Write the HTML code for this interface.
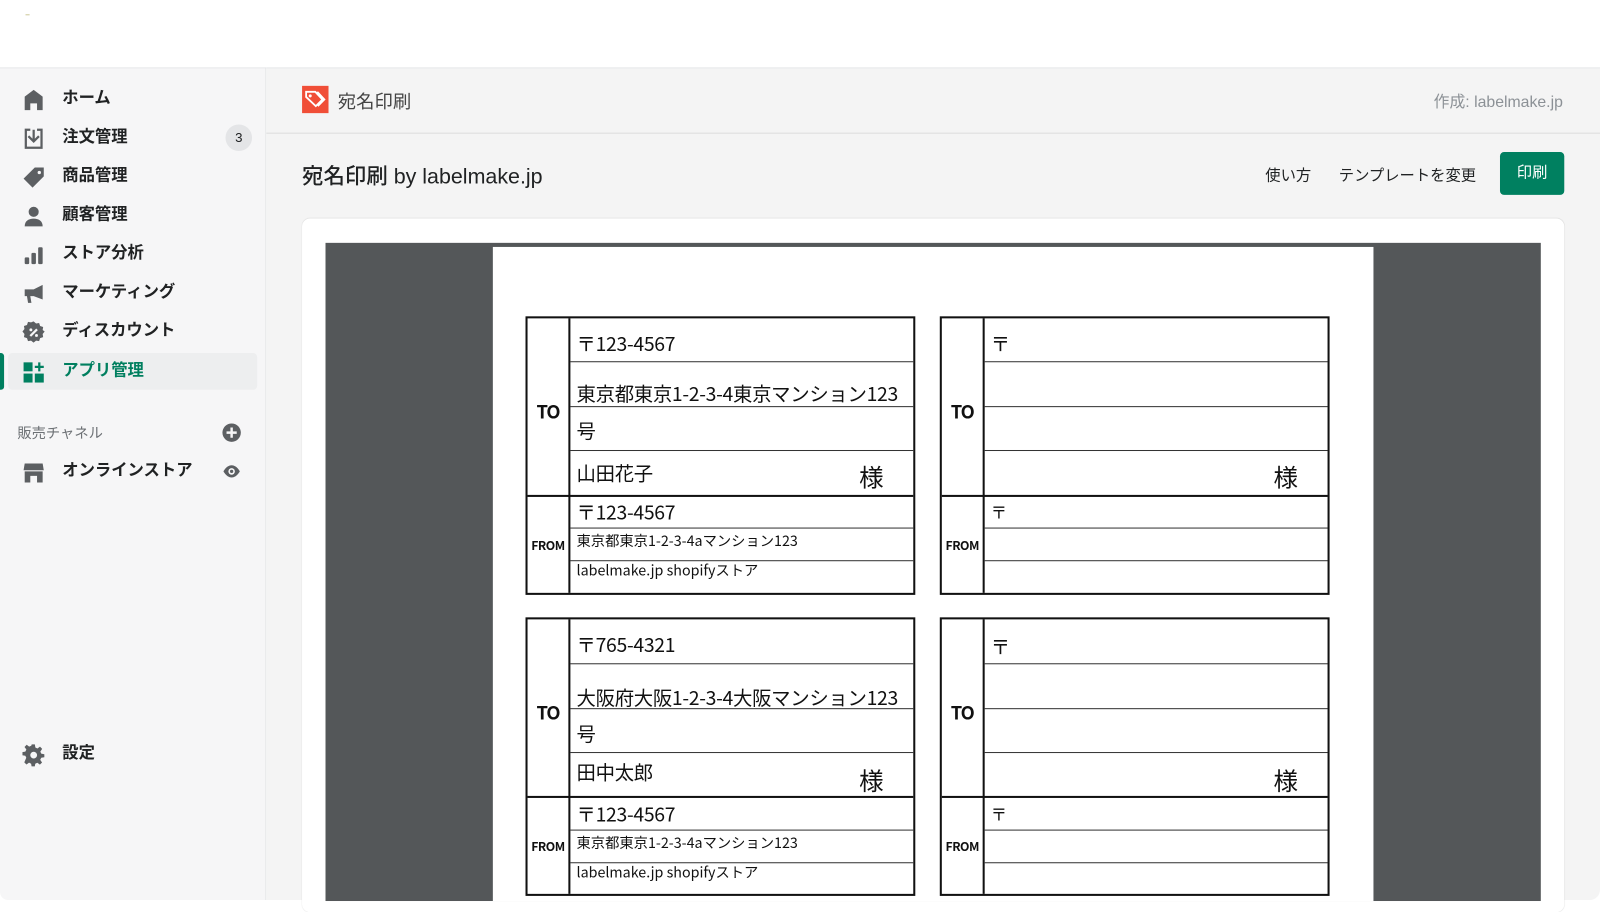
<!DOCTYPE html>
<html><head><meta charset="utf-8"><style>
*{margin:0;padding:0;box-sizing:border-box}
body{width:1600px;height:900px;background:#fff;font-family:"Liberation Sans","Noto Sans CJK JP",sans-serif;position:relative;overflow:hidden;color:#202223}
#wrap{position:absolute;left:0;top:0;width:1568px;height:882px;transform:scale(1.0204);transform-origin:0 0}
.abs{position:absolute}
#side{left:0;top:66px;width:261px;height:816px;background:#f6f6f7;border-right:1px solid #e1e3e5;border-top:1px solid #e1e3e5;border-bottom-left-radius:8px}
#main{left:261px;top:66px;width:1307px;height:816px;background:#f4f4f4;border-top:1px solid #e1e3e5;border-bottom-right-radius:10px}
.nav{position:absolute;left:22px;font-size:16px;font-weight:bold;color:#202223;height:38px;line-height:38px}
.nav svg{position:absolute;left:0;top:9px}
.nav span{position:absolute;left:39px;white-space:nowrap}
.lab{position:absolute;width:382px;height:273px;border:2px solid #111;background:#fff;font-family:"Noto Sans CJK JP",sans-serif;color:#111}
.lab .v{position:absolute;left:40px;top:0;width:2px;height:100%;background:#111}
.lab .h2{position:absolute;left:0;top:173px;width:100%;height:2px;background:#111}
.lab .h{position:absolute;left:42px;width:336px;height:1px;background:#333}
.lab .t{position:absolute;left:48px;white-space:nowrap;line-height:1}
.lab .to{position:absolute;left:0;width:40px;text-align:center;font-weight:bold;font-size:18px;top:78px;letter-spacing:-1px}
.lab .fr{position:absolute;left:0;width:40px;text-align:center;font-weight:bold;font-size:12px;top:214px;letter-spacing:-0.5px}
.lab .sama{position:absolute;left:325px;top:143px;font-size:24px;line-height:1}
.lab .ad{font-size:19px;letter-spacing:-0.3px}
</style></head><body>
<div id="wrap">
<div class="abs" style="left:25px;top:14px;width:4px;height:1px;background:#cdc89a"></div>
<div id="side" class="abs">
 <div class="nav" style="top:11px"><svg width="22" height="22" viewBox="0 0 20 20"><path d="M10 1 L2 7 V19 H7 V13 H13 V19 H18 V7 Z" fill="#5c5f62"/></svg><span>ホーム</span></div>
 <div class="nav" style="top:49px"><svg width="22" height="22" viewBox="0 0 20 20"><path d="M2 1h5v2H4v14h12V3h-3V1h5v18H2z M9 2h2v8l3-3 1.4 1.4L10 13.8 4.6 8.4 6 7l3 3z" fill="#5c5f62"/></svg><span>注文管理</span></div>
 <div class="abs" style="left:221px;top:55px;width:26px;height:26px;border-radius:13px;background:#e4e5e7;font-size:13px;text-align:center;line-height:26px;color:#202223">3</div>
 <div class="nav" style="top:87px"><svg width="22" height="22" viewBox="0 0 20 20"><path d="M11 1h8v8L9 19 1 11zM15 4a1.5 1.5 0 100 3 1.5 1.5 0 000-3z" fill="#5c5f62" fill-rule="evenodd"/></svg><span>商品管理</span></div>
 <div class="nav" style="top:125px"><svg width="22" height="22" viewBox="0 0 20 20"><circle cx="10" cy="6" r="4.5" fill="#5c5f62"/><path d="M2 19c0-5 3.5-7 8-7s8 2 8 7z" fill="#5c5f62"/></svg><span>顧客管理</span></div>
 <div class="nav" style="top:163px"><svg width="22" height="22" viewBox="0 0 20 20"><rect x="2" y="12" width="4" height="6" rx="1" fill="#5c5f62"/><rect x="8" y="8" width="4" height="10" rx="1" fill="#5c5f62"/><rect x="14" y="3" width="4" height="15" rx="1" fill="#5c5f62"/></svg><span>ストア分析</span></div>
 <div class="nav" style="top:201px"><svg width="22" height="22" viewBox="0 0 20 20"><path d="M18 2v13L10 12H7l1 6H5l-1-6H2V6h8z" fill="#5c5f62"/></svg><span>マーケティング</span></div>
 <div class="nav" style="top:239px"><svg width="22" height="22" viewBox="0 0 20 20"><path d="M10 0l2.5 2 3-.5 1 3 3 1-.5 3L21 10l-2 2.5.5 3-3 1-1 3-3-.5L10 21l-2.5-2-3 .5-1-3-3-1 .5-3L-1 10l2-2.5-.5-3 3-1 1-3 3 .5z" fill="#5c5f62" transform="scale(.9) translate(1 0)"/><path d="M7 13l6-6" stroke="#f6f6f7" stroke-width="2"/><circle cx="7.5" cy="7.5" r="1.3" fill="#f6f6f7"/><circle cx="12.5" cy="12.5" r="1.3" fill="#f6f6f7"/></svg><span>ディスカウント</span></div>
 <div class="abs" style="left:8px;top:279px;width:244px;height:36px;background:#edeeef;border-radius:4px"></div>
 <div class="abs" style="left:0;top:279px;width:4px;height:36px;background:#008060;border-radius:0 3px 3px 0"></div>
 <div class="nav" style="top:278px;color:#007f5f"><svg width="22" height="22" viewBox="0 0 20 20"><rect x="1" y="1" width="8" height="8" fill="#008060"/><rect x="1" y="11" width="8" height="8" fill="#008060"/><rect x="11" y="11" width="8" height="8" fill="#008060"/><path d="M15 1v8M11 5h8" stroke="#008060" stroke-width="2"/></svg><span>アプリ管理</span></div>
 <div class="abs" style="left:17px;top:347px;font-size:14px;color:#6d7175">販売チャネル</div>
 <svg class="abs" style="left:217px;top:347px" width="20" height="20" viewBox="0 0 20 20"><circle cx="10" cy="10" r="9" fill="#5c5f62"/><path d="M10 5v10M5 10h10" stroke="#f6f6f7" stroke-width="2.4"/></svg>
 <div class="nav" style="top:376px"><svg width="22" height="22" viewBox="0 0 20 20"><path d="M2 2h16l1 6H1z M2 9h16v10h-5v-6H7v6H2z" fill="#5c5f62"/></svg><span>オンラインストア</span></div>
 <svg class="abs" style="left:217px;top:385px" width="20" height="20" viewBox="0 0 20 20"><path d="M10 4C5 4 2 10 2 10s3 6 8 6 8-6 8-6-3-6-8-6z" fill="#5c5f62"/><circle cx="10" cy="10" r="3.2" fill="#f6f6f7"/><circle cx="10" cy="10" r="1.6" fill="#5c5f62"/></svg>
 <div class="nav" style="top:653px"><svg width="22" height="22" viewBox="0 0 20 20"><path d="M8.5 0h3l.5 3 2 1 2.5-1.8 2.1 2.1L16.8 7l.9 2 3 .5v3l-3 .5-1 2 1.8 2.5-2.1 2.1-2.5-1.8-2 .9-.5 3h-3l-.5-3-2-1-2.5 1.8-2.1-2.1L3.2 13l-.9-2-3-.5v-3l3-.5 1-2L1.5 2.5l2.1-2.1L6 2.2l2-.9z" fill="#5c5f62" transform="scale(.92) translate(.5 .5)"/><circle cx="10" cy="10" r="3" fill="#f6f6f7"/></svg><span>設定</span></div>
</div>
<div id="main" class="abs">
 <div class="abs" style="left:0;top:63px;width:1307px;height:1px;background:#dcdcdc"></div>
 <svg class="abs" style="left:35px;top:17px" width="26" height="27" viewBox="0 0 26 27"><rect width="26" height="27" fill="#f04e37"/><path d="M4 6h9l7 7.5-6.5 6.5L4 11z" fill="none" stroke="#fff" stroke-width="1.8"/><path d="M15 6l7 7.5-6.5 6.5" fill="none" stroke="#fff" stroke-width="1.6"/><circle cx="8" cy="10" r="1.5" fill="#fff"/></svg>
 <div class="abs" style="left:70px;top:19px;font-size:18px;color:#444">宛名印刷</div>
 <div class="abs" style="left:1144px;top:21px;font-size:15.5px;color:#8c9196">作成: labelmake.jp</div>
 <div class="abs" style="left:35px;top:90px;font-size:21px;color:#202223;font-weight:500">宛名印刷 by labelmake.jp</div>
 <div class="abs" style="left:979px;top:94px;font-size:15px;color:#202223">使い方</div>
 <div class="abs" style="left:1051px;top:94px;font-size:15px;color:#202223">テンプレートを変更</div>
 <div class="abs" style="left:1209px;top:82px;width:63px;height:42px;background:#008060;border-radius:4px;color:#fff;font-size:15px;text-align:center;line-height:42px">印刷</div>
 <div class="abs" style="left:35px;top:147px;width:1237px;height:680px;background:#fff;border-radius:8px;box-shadow:0 0 1px rgba(0,0,0,.15)"></div>
 <div class="abs" style="left:58px;top:171px;width:1191px;height:645px;background:#545759"></div>
 <div class="abs" style="left:222px;top:175px;width:863px;height:641px;background:#fff"></div>
</div>

<div class="lab" style="left:515px;top:310px">
 <div class="v"></div><div class="h2"></div>
 <div class="h" style="top:42px"></div><div class="h" style="top:86px"></div><div class="h" style="top:129px"></div>
 <div class="h" style="top:205px"></div><div class="h" style="top:237px"></div>
 <div class="to">TO</div><div class="fr">FROM</div>
 <div class="t ad" style="top:15px">〒123-4567</div>
 <div class="t ad" style="top:64px">東京都東京1-2-3-4東京マンション123</div>
 <div class="t ad" style="top:100px">号</div>
 <div class="t ad" style="top:142px">山田花子</div>
 <div class="sama">様</div>
 <div class="t ad" style="top:180px">〒123-4567</div>
 <div class="t" style="top:211px;font-size:14px">東京都東京1-2-3-4aマンション123</div>
 <div class="t" style="top:240px;font-size:14px">labelmake.jp shopifyストア</div>
</div>
<div class="lab" style="left:921px;top:310px">
 <div class="v"></div><div class="h2"></div>
 <div class="h" style="top:42px"></div><div class="h" style="top:86px"></div><div class="h" style="top:129px"></div>
 <div class="h" style="top:205px"></div><div class="h" style="top:237px"></div>
 <div class="to">TO</div><div class="fr">FROM</div>
 <div class="t" style="top:15px;font-size:19px">〒</div>
 <div class="sama">様</div>
 <div class="t" style="top:181px;font-size:16px">〒</div>
</div>
<div class="lab" style="left:515px;top:605px">
 <div class="v"></div><div class="h2"></div>
 <div class="h" style="top:43px"></div><div class="h" style="top:87px"></div><div class="h" style="top:130px"></div>
 <div class="h" style="top:206px"></div><div class="h" style="top:238px"></div>
 <div class="to">TO</div><div class="fr">FROM</div>
 <div class="t ad" style="top:15px">〒765-4321</div>
 <div class="t ad" style="top:67px">大阪府大阪1-2-3-4大阪マンション123</div>
 <div class="t ad" style="top:102px">号</div>
 <div class="t ad" style="top:140px">田中太郎</div>
 <div class="sama" style="top:145px">様</div>
 <div class="t ad" style="top:181px">〒123-4567</div>
 <div class="t" style="top:212px;font-size:14px">東京都東京1-2-3-4aマンション123</div>
 <div class="t" style="top:241px;font-size:14px">labelmake.jp shopifyストア</div>
</div>
<div class="lab" style="left:921px;top:605px">
 <div class="v"></div><div class="h2"></div>
 <div class="h" style="top:43px"></div><div class="h" style="top:87px"></div><div class="h" style="top:130px"></div>
 <div class="h" style="top:206px"></div><div class="h" style="top:238px"></div>
 <div class="to">TO</div><div class="fr">FROM</div>
 <div class="t" style="top:17px;font-size:19px">〒</div>
 <div class="sama" style="top:145px">様</div>
 <div class="t" style="top:182px;font-size:16px">〒</div>
</div>
</div>
</body></html>
